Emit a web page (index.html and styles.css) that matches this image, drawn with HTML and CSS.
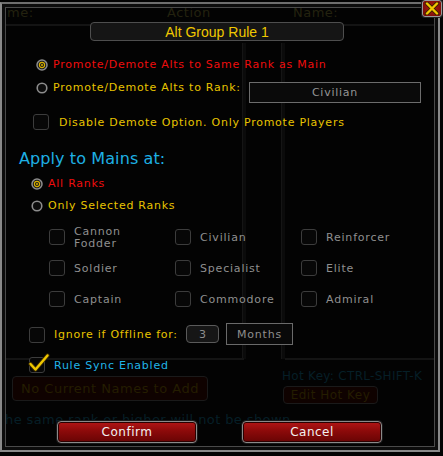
FILE: index.html
```html
<!DOCTYPE html>
<html>
<head>
<meta charset="utf-8">
<link rel="stylesheet" href="styles.css">
</head>
<body>
<div class="scene">
  <div class="under">
    <span class="u-head u-me">me:</span>
    <span class="u-head u-action">Action</span>
    <span class="u-head u-name">Name:</span>
    <div class="u-hline u-top"></div>
    <div class="u-vline u-v1"></div>
    <div class="u-vline u-v2"></div>
    <div class="u-hline u-mid1"></div>
    <div class="u-hline u-mid2"></div>
    <div class="u-btn u-add">No Current Names to Add</div>
    <span class="u-teal u-hotkey">Hot Key: CTRL-SHIFT-K</span>
    <div class="u-btn u-edit">Edit Hot Key</div>
    <span class="u-teal u-note">he same rank or higher will not be shown</span>
  </div>

  <div class="frame"></div>
  <button class="close" aria-label="Close">
    <svg width="14" height="13" viewBox="0 0 14 13"><path d="M2 1.5 L12 11.5 M12 1.5 L2 11.5" stroke="#3a2400" stroke-width="4" stroke-linecap="round"/><path d="M2 1.5 L12 11.5 M12 1.5 L2 11.5" stroke="#f2c600" stroke-width="2.4" stroke-linecap="round"/></svg>
  </button>

  <main class="dialog">
    <div class="title">Alt Group Rule 1</div>

    <div class="row r-same">
      <span class="radio on"><svg width="12" height="12" viewBox="0 0 12 12"><circle cx="6" cy="6" r="5" fill="#1a1a1a" stroke="#8c8c8c" stroke-width="1.5"/><circle cx="6" cy="6" r="2.6" fill="none" stroke="#d8b000" stroke-width="1.1"/><circle cx="6" cy="6" r="1" fill="#d8b000"/></svg></span>
      <span class="txt red">Promote/Demote Alts to Same Rank as Main</span>
    </div>

    <div class="row r-rank">
      <span class="radio"><svg width="12" height="12" viewBox="0 0 12 12"><circle cx="6" cy="6" r="4.8" fill="#0c0c0c" stroke="#8c8c8c" stroke-width="1.6"/></svg></span>
      <span class="txt yellow">Promote/Demote Alts to Rank:</span>
      <div class="dropdown">Civilian</div>
    </div>

    <div class="row r-disable">
      <span class="check"></span>
      <span class="txt yellow">Disable Demote Option. Only Promote Players</span>
    </div>

    <h2 class="heading">Apply to Mains at:</h2>

    <div class="row r-all">
      <span class="radio on"><svg width="12" height="12" viewBox="0 0 12 12"><circle cx="6" cy="6" r="5" fill="#1a1a1a" stroke="#8c8c8c" stroke-width="1.5"/><circle cx="6" cy="6" r="2.6" fill="none" stroke="#d8b000" stroke-width="1.1"/><circle cx="6" cy="6" r="1" fill="#d8b000"/></svg></span>
      <span class="txt red">All Ranks</span>
    </div>
    <div class="row r-only">
      <span class="radio"><svg width="12" height="12" viewBox="0 0 12 12"><circle cx="6" cy="6" r="4.8" fill="#0c0c0c" stroke="#8c8c8c" stroke-width="1.6"/></svg></span>
      <span class="txt yellow">Only Selected Ranks</span>
    </div>

    <div class="ranks">
      <div class="cell"><span class="check"></span><span class="lbl two">Cannon<br>Fodder</span></div>
      <div class="cell"><span class="check"></span><span class="lbl">Civilian</span></div>
      <div class="cell"><span class="check"></span><span class="lbl">Reinforcer</span></div>
      <div class="cell"><span class="check"></span><span class="lbl">Soldier</span></div>
      <div class="cell"><span class="check"></span><span class="lbl">Specialist</span></div>
      <div class="cell"><span class="check"></span><span class="lbl">Elite</span></div>
      <div class="cell"><span class="check"></span><span class="lbl">Captain</span></div>
      <div class="cell"><span class="check"></span><span class="lbl">Commodore</span></div>
      <div class="cell"><span class="check"></span><span class="lbl">Admiral</span></div>
    </div>

    <div class="row r-offline">
      <span class="check"></span>
      <span class="txt yellow offline-lbl">Ignore if Offline for:</span>
      <div class="numbox">3</div>
      <div class="unitbox">Months</div>
    </div>

    <div class="row r-sync">
      <span class="check checked"><svg class="tick" width="22" height="20" viewBox="0 0 22 20"><path d="M2.5 11 L7.5 16.5 L19.5 2.5" fill="none" stroke="#3a2a00" stroke-width="4.2" stroke-linejoin="round" stroke-linecap="round"/><path d="M2.5 11 L7.5 16.5 L19.5 2.5" fill="none" stroke="#f0c800" stroke-width="2.4" stroke-linejoin="round" stroke-linecap="round"/></svg></span>
      <span class="txt cyan">Rule Sync Enabled</span>
    </div>

    <div class="actions">
      <button class="btn">Confirm</button>
      <button class="btn">Cancel</button>
    </div>
  </main>
</div>
</body>
</html>
```

FILE: styles.css
```css
* { box-sizing: border-box; }

html, body {
  margin: 0;
  padding: 0;
  background: #000;
}

body {
  width: 443px;
  height: 456px;
  overflow: hidden;
  font-family: "DejaVu Sans", Verdana, sans-serif;
}

.scene {
  position: relative;
  width: 443px;
  height: 456px;
  background: #030303;
}

/* ---------- underlying window (dimmed) ---------- */
.under {
  position: absolute;
  inset: 0;
}

.u-head {
  position: absolute;
  top: 5px;
  font-size: 13px;
  letter-spacing: 0.5px;
  color: #23220f;
  line-height: 16px;
}
.u-me { left: 7px; }
.u-action { left: 167px; }
.u-name { left: 293px; }

.u-hline {
  position: absolute;
  height: 2px;
  background: #141414;
}
.u-top { left: 6px; right: 8px; top: 24px; }
.u-mid1 { left: 6px; width: 238px; top: 358px; }
.u-mid2 { left: 285px; right: 9px; top: 358px; }

.u-vline {
  position: absolute;
  top: 43px;
  height: 316px;
  width: 4px;
  background: #0b0b0b;
  border-left: 1px solid #151515;
}
.u-v1 { left: 242px; }
.u-v2 { left: 281px; }

.u-btn {
  position: absolute;
  border: 1px solid #1a1a1a;
  border-radius: 4px;
  background: #0f0200;
  color: #241d00;
  font-size: 13px;
  letter-spacing: 0.5px;
  display: flex;
  align-items: center;
  justify-content: center;
}
.u-add { left: 12px; top: 376px; width: 196px; height: 25px; }
.u-edit { left: 283px; top: 386px; width: 95px; height: 18px; font-size: 12px; }

.u-teal {
  position: absolute;
  color: #061f27;
  font-size: 12px;
  letter-spacing: 0.3px;
  line-height: 14px;
  white-space: nowrap;
}
.u-hotkey { left: 282px; top: 369px; }
.u-note { left: 5px; top: 413px; font-size: 13px; letter-spacing: 0.4px; }

/* ---------- frame ---------- */
.frame {
  position: absolute;
  left: 0;
  top: 2px;
  right: 3px;
  bottom: 4px;
  border: 2px solid #8a8a8a;
  border-top-color: #6e6e6e;
  box-shadow: inset 0 0 0 3px #0c0c0c, inset 0 0 0 4px #4a4a4a;
  pointer-events: none;
}

.close {
  position: absolute;
  left: 422px;
  top: 0;
  width: 20px;
  height: 17px;
  padding: 0;
  border: 1px solid #9a9a9a;
  border-radius: 3px;
  background: radial-gradient(circle at 50% 45%, #b01a12, #6e0a06);
  box-shadow: 0 0 0 1px #222;
  display: flex;
  align-items: center;
  justify-content: center;
}

/* ---------- dialog ---------- */
.dialog {
  position: relative;
  display: flex;
  flex-direction: column;
  padding-top: 22px;
  height: 456px;
}

.title {
  margin-left: 90px;
  width: 254px;
  height: 19px;
  border: 1px solid #4e4e4e;
  border-radius: 4px;
  background: #151515;
  color: #f0c800;
  font-family: "Liberation Sans Narrow", "Arial Narrow", "Liberation Sans", sans-serif;
  font-size: 14px;
  display: flex;
  align-items: center;
  justify-content: center;
}

.row {
  display: flex;
  align-items: center;
}

.txt {
  font-size: 11px;
  line-height: 14px;
  letter-spacing: 0.75px;
  white-space: nowrap;
}
.red { color: #ee0d0d; }
.yellow { color: #e8c400; }
.cyan { color: #20b4e8; }

.radio {
  display: flex;
  width: 12px;
  height: 12px;
}

.r-same { margin-top: 17px; height: 14px; padding-left: 36px; gap: 5px; }
.r-rank { margin-top: 9px; height: 23px; padding-left: 36px; padding-right: 22px; gap: 5px; align-items: flex-start; }
.r-rank .radio { margin-top: 1px; }

.dropdown {
  margin-left: auto;
  margin-top: 1px;
  width: 172px;
  height: 21px;
  border: 1px solid #6c6c6c;
  background: #0a0a0a;
  color: #949494;
  font-size: 11px;
  letter-spacing: 0.75px;
  display: flex;
  align-items: center;
  justify-content: center;
}

.check {
  position: relative;
  display: block;
  flex: 0 0 16px;
  width: 16px;
  height: 16px;
  border: 1px solid #3c3c3c;
  border-radius: 3px;
  background: #070707;
}

.r-disable { margin-top: 10px; height: 16px; padding-left: 33px; gap: 10px; }
.r-disable .txt { margin-top: 2px; }

.heading {
  margin: 19px 0 0 19px;
  font-size: 16px;
  line-height: 20px;
  font-weight: normal;
  letter-spacing: 0.1px;
  color: #1eb0e4;
}

.r-all { margin-top: 8px; height: 14px; padding-left: 31px; gap: 5px; }
.r-only { margin-top: 8px; height: 14px; padding-left: 31px; gap: 5px; }

.ranks {
  margin-top: 16px;
  padding-left: 49px;
  display: grid;
  grid-template-columns: 126px 126px 126px;
  grid-template-rows: 16px 16px 16px;
  row-gap: 15px;
}

.cell {
  display: flex;
  align-items: center;
  gap: 9px;
  height: 16px;
}

.lbl {
  font-size: 11px;
  line-height: 12px;
  letter-spacing: 0.8px;
  color: #8f8f8f;
  white-space: nowrap;
  margin-top: 1px;
}

.r-offline { margin-top: 16px; height: 22px; padding-left: 29px; }
.r-offline .check { margin-top: 1px; }
.offline-lbl { margin-left: 9px; width: 132px; margin-top: 1px; }

.numbox {
  width: 33px;
  height: 18px;
  border: 1px solid #5a5a5a;
  border-radius: 4px;
  background: #161616;
  color: #8e8e8e;
  font-size: 11px;
  display: flex;
  align-items: center;
  justify-content: center;
}

.unitbox {
  margin-left: 7px;
  width: 67px;
  height: 22px;
  border: 1px solid #6a6a6a;
  background: #090909;
  color: #8e8e8e;
  font-size: 11px;
  letter-spacing: 0.8px;
  display: flex;
  align-items: center;
  justify-content: center;
}

.r-sync { margin-top: 12px; height: 16px; padding-left: 29px; gap: 9px; }
.r-sync .txt { margin-top: 2px; }

.tick {
  position: absolute;
  left: -2px;
  top: -5px;
}

.actions {
  margin-top: 48px;
  padding-left: 57px;
  display: flex;
  gap: 45px;
}

.btn {
  width: 140px;
  height: 22px;
  padding: 0;
  border: 1px solid #8a8a8a;
  border-radius: 4px;
  background: linear-gradient(#b21616 0%, #8c0a0a 45%, #680404 100%);
  box-shadow: inset 0 0 0 1px #2a0000, 0 0 0 1px #1a1a1a;
  color: #f2f2f2;
  font-family: "DejaVu Sans", Verdana, sans-serif;
  font-size: 12px;
  letter-spacing: 0.5px;
  display: flex;
  align-items: center;
  justify-content: center;
}
```
